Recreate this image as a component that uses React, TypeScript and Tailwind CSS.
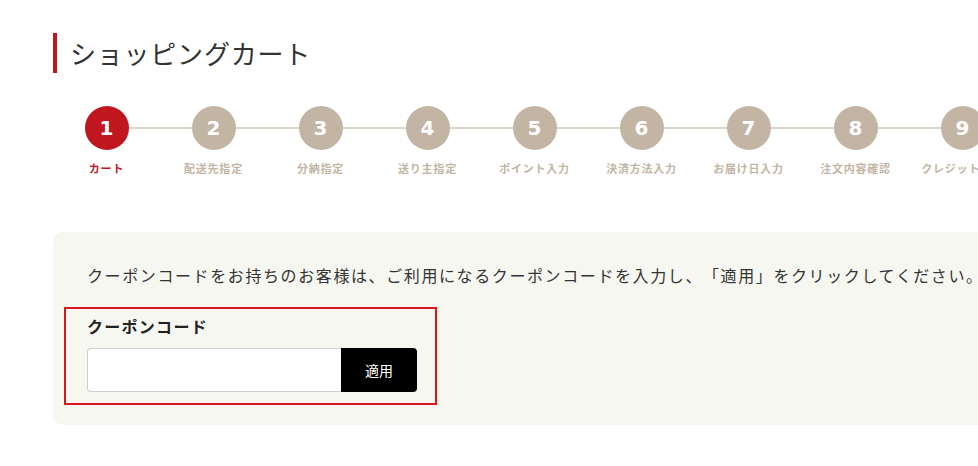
const steps = [
  "カート",
  "配送先指定",
  "分納指定",
  "送り主指定",
  "ポイント入力",
  "決済方法入力",
  "お届け日入力",
  "注文内容確認",
  "クレジット決済",
];

const jp = "font-['Noto_Sans_CJK_JP','Noto_Sans',sans-serif]";

function StepBar() {
  return (
    <ol className="flex mt-[33px]">
      {steps.map((label, i) => {
        const active = i === 0;
        return (
          <li key={label} className="w-[107px] shrink-0 flex flex-col items-center">
            <div className="flex items-center w-full">
              <div className={`h-[2px] flex-1 ${i === 0 ? "bg-transparent" : "bg-[#ddd4ca]"}`} />
              <div
                className={`w-[44px] h-[44px] rounded-full flex items-center justify-center text-white font-bold text-[20px] font-['DejaVu_Sans',sans-serif] ${
                  active ? "bg-[#c0171f]" : "bg-[#c3b5a4]"
                }`}
              >
                {i + 1}
              </div>
              <div className={`h-[2px] flex-1 ${i === steps.length - 1 ? "bg-transparent" : "bg-[#ddd4ca]"}`} />
            </div>
            <span
              className={`mt-[10px] text-[11px] leading-[16px] font-bold tracking-[0.07em] whitespace-nowrap ${
                active ? "text-[#c0171f]" : "text-[#c3b5a4]"
              }`}
            >
              {label}
            </span>
          </li>
        );
      })}
    </ol>
  );
}

function CouponPanel() {
  return (
    <section className="mt-[56px] w-[1000px] bg-[#f7f7f1] rounded-[10px] pt-[31px] pb-[20px] pl-[11px]">
      <p className="pl-[23px] text-[16px] leading-[24px] tracking-[0.1em] text-[#333] whitespace-nowrap [text-spacing-trim:space-all]">
        クーポンコードをお持ちのお客様は、ご利用になるクーポンコードを入力し、「適用」をクリックしてください。
      </p>
      <div className="mt-[20px] w-[373px] border-2 border-[#d7171f] pt-[5px] pb-[11px] pl-[21px]">
        <label className="block text-[16px] leading-[24px] font-bold tracking-[0.08em] text-[#222]">
          クーポンコード
        </label>
        <div className="mt-[10px] flex h-[44px]">
          <input
            type="text"
            className="w-[254px] h-full bg-white border border-[#cfcfcf] border-r-0 rounded-l-[4px] px-3 outline-none"
          />
          <button className="w-[76px] h-full bg-black text-white text-[14px] rounded-r-[4px]">適用</button>
        </div>
      </div>
    </section>
  );
}

export default function App() {
  return (
    <div className={`w-[978px] h-[466px] overflow-hidden bg-white ${jp}`}>
      <div className="pl-[53px] pt-[33px] w-[1200px]">
        <h1 className="flex items-center h-[40px]">
          <span className="w-[4px] h-[40px] bg-[#c0171f]" />
          <span className="ml-[13px] text-[26px] leading-[40px] tracking-[0.03em] text-[#333] font-normal">
            ショッピングカート
          </span>
        </h1>
        <StepBar />
        <CouponPanel />
      </div>
    </div>
  );
}
